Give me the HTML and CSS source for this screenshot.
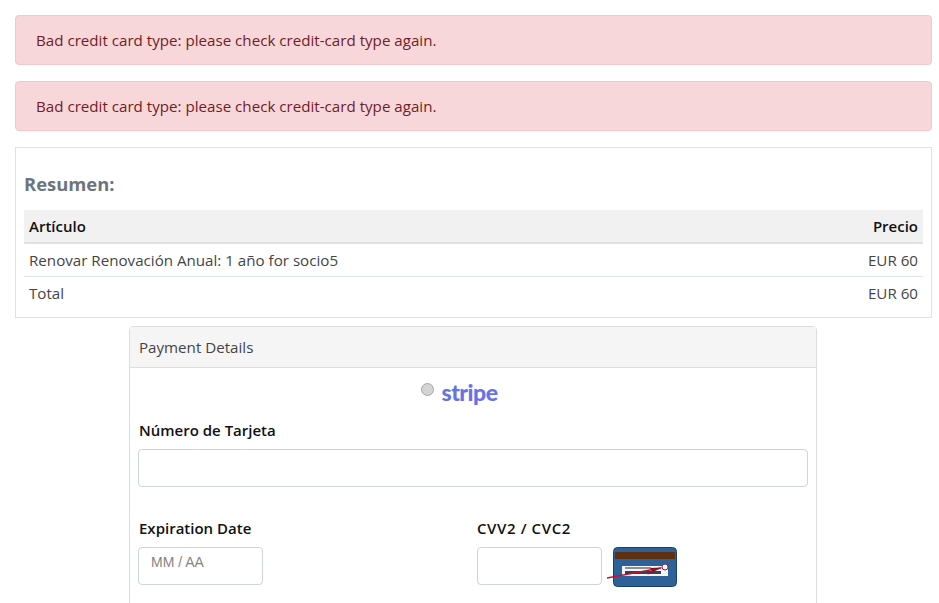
FILE: index.html
```html
<!DOCTYPE html>
<html lang="en">
<head>
    <meta charset="UTF-8">
    <title>Payment</title>
    <link rel="stylesheet" href="styles.css">
</head>
<body>
    <!-- Errors -->
    <div class="alert">Bad credit card type: please check credit-card type again.</div>
    <div class="alert">Bad credit card type: please check credit-card type again.</div>

    <!-- Order summary -->
    <div class="summary">
        <h4>Resumen:</h4>
        <table class="summary-table">
            <thead>
                <tr>
                    <th>Artículo</th>
                    <th class="price">Precio</th>
                </tr>
            </thead>
            <tbody>
                <tr>
                    <td>Renovar Renovación Anual: 1 año for socio5</td>
                    <td class="price">EUR 60</td>
                </tr>
                <tr>
                    <td>Total</td>
                    <td class="price">EUR 60</td>
                </tr>
            </tbody>
        </table>
    </div>

    <!-- Payment form -->
    <div class="panel">
        <div class="panel-heading">Payment Details</div>
        <div class="panel-body">
            <div class="gateway">
                <input type="radio" name="gateway" class="gateway-radio">
                <span class="stripe-logo">stripe</span>
            </div>
            <div class="field card-number">
                <label for="cardNumber">Número de Tarjeta</label>
                <input type="text" id="cardNumber" class="form-control">
            </div>
            <div class="form-row">
                <div class="field">
                    <label for="expiry">Expiration Date</label>
                    <input type="text" id="expiry" class="form-control small-input" placeholder="MM / AA">
                </div>
                <div class="field">
                    <label for="cvv" class="cvv-label">CVV2 / CVC2</label>
                    <div class="cvv-line">
                        <input type="text" id="cvv" class="form-control small-input">
                        <svg class="cvv-card" width="64" height="40" viewBox="0 0 64 40">
                            <rect x="0.5" y="0.5" width="63" height="39" rx="4" fill="#2f6199" stroke="#1d3f66"/>
                            <rect x="2" y="5" width="60" height="7" fill="#5e3210"/>
                            <rect x="9" y="19" width="46" height="10" fill="#f4f6fa"/>
                            <rect x="12" y="20" width="26" height="2" fill="#8a8f99"/>
                            <rect x="12" y="24" width="36" height="3" fill="#3c3f4c"/>
                            <circle cx="52" cy="20" r="3" fill="#fff" stroke="#8c2030"/>
                            <path d="M-6 31 L48 21" fill="none" stroke="#c8102e" stroke-width="1.4"/>
                            <polygon points="49,20.5 37,21 39,24 34,28" fill="#8c1020"/>
                        </svg>
                    </div>
                </div>
            </div>
        </div>
    </div>
</body>
</html>
```

FILE: styles.css
```css
/* Reset styles */
* {
    margin: 0;
    padding: 0;
    box-sizing: border-box;
}

html, body {
    height: 100%;
    overflow: hidden;
}

body {
    font-family: "Open Sans", "Noto Sans", Arial, sans-serif;
    font-size: 15.15px;
    line-height: 24px;
    color: #444;
    background: #fff;
    padding: 15px 7px 0 15px;
}

/* Error messages */
.alert {
    height: 50px;
    margin-bottom: 16px;
    padding: 12px 20px;
    background-color: #f8d7da;
    border: 1px solid #f5c6cb;
    border-radius: 4px;
    color: #721c24;
}

/* Order summary */
.summary {
    height: 171px;
    padding: 8px;
    border: 1px solid #dee2e6;
}

.summary h4 {
    margin-top: 15px;
    margin-bottom: 13px;
    font-size: 18.4px;
    line-height: 26px;
    font-weight: 700;
    color: #6c757d;
}

.summary-table {
    width: 100%;
    border-collapse: collapse;
}

.summary-table th {
    height: 33px;
    padding: 0 5px;
    background-color: #f1f1f1;
    border-bottom: 2px solid #dee2e6;
    color: #111;
    font-size: 15px;
    font-weight: 600;
    text-align: left;
}

.summary-table td {
    height: 33px;
    padding: 0 5px;
    border-bottom: 1px solid #dee2e6;
}

.summary-table tr:last-child td {
    border-bottom: none;
}

.summary-table .price {
    text-align: right;
}

/* Payment panel */
.panel {
    width: 688px;
    margin-top: 8px;
    margin-left: 114px;
    border: 1px solid #ddd;
    border-radius: 4px;
}

.panel-heading {
    height: 41px;
    padding: 8px 9px;
    background-color: #f5f5f5;
    border-bottom: 1px solid #ddd;
}

.panel-body {
    padding: 8px 8px 40px;
}

.gateway {
    display: flex;
    justify-content: center;
    height: 42px;
    padding-right: 28px;
}

.gateway-radio {
    appearance: none;
    width: 13px;
    height: 13px;
    margin-top: 7px;
    margin-right: 8px;
    border: 1px solid #a5a5a5;
    border-radius: 50%;
    background: #d4d4d4;
}

.stripe-logo {
    font-family: "Lato", sans-serif;
    font-size: 23px;
    line-height: 32px;
    font-weight: 900;
    letter-spacing: -0.5px;
    color: #6772e5;
}

.field label {
    display: block;
    margin-bottom: 7px;
    padding-left: 1px;
    color: #111;
    font-size: 15px;
    font-weight: 600;
}

.field .cvv-label {
    padding-left: 0;
    letter-spacing: 0.6px;
}

.card-number {
    margin-bottom: 29px;
}

.form-control {
    display: block;
    width: 100%;
    height: 38px;
    padding: 0 12px;
    border: 1px solid #ced4da;
    border-radius: 4px;
    font-family: "Liberation Sans", Arial, sans-serif;
    font-size: 14px;
    color: #495057;
}

.form-control::placeholder {
    color: #848484;
}

.form-row {
    display: grid;
    grid-template-columns: 339px 1fr;
}

.small-input {
    width: 125px;
    padding-bottom: 8px;
}

.cvv-line {
    display: flex;
    align-items: flex-start;
    gap: 11px;
}

.cvv-card {
    overflow: visible;
}
```
